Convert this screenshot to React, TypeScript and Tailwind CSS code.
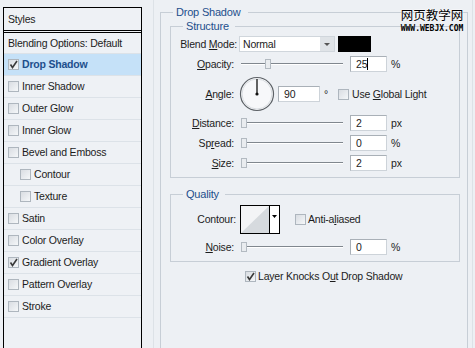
import React from 'react';

const Box = ({ checked }: { checked?: boolean }) => (
  <span className="relative inline-block w-[11px] h-[11px] shrink-0 border border-[#aeb6be] bg-gradient-to-br from-[#d9dde2] to-[#f5f7f9]">
    {checked && (
      <svg className="absolute -left-px -top-px" width="11" height="11" viewBox="0 0 11 11">
        <path d="M2.5 5.5 L4.5 8.5 L9 2" fill="none" stroke="#3a3a3a" strokeWidth="1.6" />
      </svg>
    )}
  </span>
);

const styleRows = [
  { label: 'Drop Shadow', checked: true, active: true },
  { label: 'Inner Shadow' },
  { label: 'Outer Glow' },
  { label: 'Inner Glow' },
  { label: 'Bevel and Emboss' },
  { label: 'Contour', sub: true },
  { label: 'Texture', sub: true },
  { label: 'Satin' },
  { label: 'Color Overlay' },
  { label: 'Gradient Overlay', checked: true },
  { label: 'Pattern Overlay' },
  { label: 'Stroke' },
];

const Slider = ({ at }: { at: number }) => (
  <div className="relative w-[102px] h-[12px] shrink-0">
    <div className="absolute left-0 right-0 top-[5px] h-px bg-[#80878e]" />
    <div className="absolute left-0 right-0 top-[6px] h-px bg-[#ffffff]" />
    <div
      className="absolute top-[1px] w-[6px] h-[10px] border border-[#b3bac1] bg-[#e9ecef]"
      style={{ left: at }}
    />
  </div>
);

const Field = ({ value, w = 'w-[37px]', caret }: { value: string; w?: string; caret?: boolean }) => (
  <div className={`${w} h-[16px] shrink-0 bg-white border border-[#cdd3d9] border-t-[#a9b0b7] border-l-[#a9b0b7] pl-[5px] flex items-center leading-none`}>
    {value}
    {caret && <span className="inline-block w-px h-[12px] bg-black" />}
  </div>
);

const Label = ({ w = 'w-[63px]', children }: { w?: string; children: React.ReactNode }) => (
  <div className={`${w} shrink-0 text-right`}>{children}</div>
);

const U = ({ children }: { children: React.ReactNode }) => <span className="underline underline-offset-1">{children}</span>;

const SliderRow = ({ label, at, value, unit, mt }: { label: React.ReactNode; at: number; value: string; unit: string; mt: string }) => (
  <div className={`flex items-center h-[16px] ${mt}`}>
    <Label>{label}</Label>
    <div className="ml-[7px]"><Slider at={at} /></div>
    <div className="ml-[7px]"><Field value={value} /></div>
    <span className="ml-[4px]">{unit}</span>
  </div>
);

export default function App() {
  return (
    <div className="relative w-[475px] h-[348px] overflow-hidden flex bg-[#edf0f4] text-[10.5px] tracking-[-0.2px] leading-[13px] text-[#1c1c1c] font-['Liberation_Sans',Arial,sans-serif]">
      {/* styles list */}
      <div className="ml-[3px] mt-[7px] w-[139px] h-[360px] shrink-0 border border-black border-b-0 bg-[#eef1f5] flex flex-col">
        <div className="h-[22px] pl-[4px] flex items-center">Styles</div>
        <div className="h-[3px] border-t border-b border-black" />
        <div className="h-[21px] pl-[4px] flex items-center border-b border-[#dce2e8]">Blending Options: Default</div>
        {styleRows.map((r) => (
          <div
            key={r.label}
            className={`h-[22px] flex items-center gap-[3px] border-b border-[#dce2e8] ${r.sub ? 'pl-[16px]' : 'pl-[4px]'} ${r.active ? 'bg-[#c5e1f8]' : ''}`}
          >
            <Box checked={r.checked} />
            <span className={r.active ? 'font-bold text-[#1d4f8c]' : ''}>{r.label}</span>
          </div>
        ))}
      </div>

      {/* right side */}
      <div className="ml-[11px] w-[320px] h-full shrink-0 border-l border-r border-[#dde2e7] pl-[6px]">
        <fieldset className="mt-[6px] w-[308px] min-h-[360px] border border-b-0 border-[#c7ced6]">
          <legend className="ml-[12px] pl-[3px] pr-[8px] text-[#1d4f8c] text-[11px] leading-[13px]">Drop Shadow</legend>

          <fieldset className="ml-[9px] mt-[1px] w-[290px] border border-[#c7ced6] pb-[6px]">
            <legend className="ml-[12px] pl-[3px] pr-[6px] text-[#1d4f8c] text-[11px] leading-[13px]">Structure</legend>

            <div className="flex items-center h-[16px] mt-[3px]">
              <Label w="w-[66px]">Blend <U>M</U>ode:</Label>
              <div className="ml-[2px] w-[96px] h-[16px] bg-white border border-[#d0d6dc] flex items-center pl-[3px]">
                <span className="flex-1">Normal</span>
                <span className="w-[14px] h-[14px] bg-[#dfe3e7] flex items-center justify-center">
                  <svg width="6" height="3" viewBox="0 0 6 3"><path d="M0 0h6L3 3z" fill="#555" /></svg>
                </span>
              </div>
              <div className="ml-[3px] w-[33px] h-[16px] bg-black" />
            </div>

            <div className="flex items-center h-[16px] mt-[4px]">
              <Label><U>O</U>pacity:</Label>
              <div className="ml-[7px]"><Slider at={24} /></div>
              <div className="ml-[7px]"><Field value="25" caret /></div>
              <span className="ml-[4px]">%</span>
            </div>

            <div className="flex items-center h-[36px] mt-[4px]">
              <Label><U>A</U>ngle:</Label>
              <svg className="ml-[5px] shrink-0" width="36" height="36" viewBox="0 0 36 36">
                <circle cx="18" cy="18" r="16.5" fill="#f7f8fa" stroke="#5c6166" strokeWidth="1.2" />
                <circle cx="18" cy="18" r="15" fill="none" stroke="#d9dde1" strokeWidth="1" />
                <line x1="18" y1="18" x2="18" y2="3" stroke="#111" strokeWidth="1.3" />
                <circle cx="18" cy="18" r="1.6" fill="#111" />
              </svg>
              <div className="ml-[3px]"><Field value="90" w="w-[42px]" /></div>
              <span className="ml-[4px] w-[10px]">°</span>
              <div className="ml-[4px] flex items-center gap-[3px]">
                <Box />
                <span>Use <U>G</U>lobal Light</span>
              </div>
            </div>

            <SliderRow label={<><U>D</U>istance:</>} at={0} value="2" unit="px" mt="mt-[3px]" />
            <SliderRow label={<>Sp<U>r</U>ead:</>} at={0} value="0" unit="%" mt="mt-[4px]" />
            <SliderRow label={<><U>S</U>ize:</>} at={0} value="2" unit="px" mt="mt-[4px]" />
          </fieldset>

          <fieldset className="ml-[9px] mt-[10px] w-[290px] border border-[#c7ced6] pb-[6px]">
            <legend className="ml-[12px] pl-[3px] pr-[6px] text-[#1d4f8c] text-[11px] leading-[13px]">Quality</legend>

            <div className="flex items-center h-[29px] mt-[4px]">
              <Label w="w-[65px]">Contour:</Label>
              <div className="ml-[4px] w-[40px] h-[29px] border border-black flex shrink-0">
                <svg width="28" height="27" viewBox="0 0 28 27" className="shrink-0">
                  <rect width="28" height="27" fill="#f3f4f6" />
                  <path d="M0 27 L28 0 L28 27 Z" fill="#d6dade" />
                </svg>
                <div className="flex-1 border-l border-black bg-white flex items-start justify-center pt-[9px]">
                  <svg width="5" height="3" viewBox="0 0 5 3"><path d="M0 0h5L2.5 3z" fill="#000" /></svg>
                </div>
              </div>
              <div className="ml-[15px] flex items-center gap-[2px] self-start mt-[8px]">
                <Box />
                <span>Anti-a<U>l</U>iased</span>
              </div>
            </div>

            <SliderRow label={<><U>N</U>oise:</>} at={0} value="0" unit="%" mt="mt-[5px]" />
          </fieldset>

          <div className="flex items-center h-[13px] mt-[8px] ml-[84px] gap-[2px]">
            <Box checked />
            <span>Layer Knocks O<U>u</U>t Drop Shadow</span>
          </div>
        </fieldset>
      </div>

      {/* watermark */}
      <div className="absolute left-[397px] top-[7px] w-[70px] flex flex-col items-center whitespace-nowrap tracking-normal">
        <span className="text-[12.5px] leading-[16px] text-black font-['Noto_Sans_CJK_SC',sans-serif] [text-shadow:0_0_2px_#fff,0_0_2px_#fff]">网页教学网</span>
        <span className="mt-[1px] text-[8px] leading-[9px] font-bold text-black font-['DejaVu_Sans_Mono',monospace]">WWW.WEBJX.COM</span>
      </div>
    </div>
  );
}
